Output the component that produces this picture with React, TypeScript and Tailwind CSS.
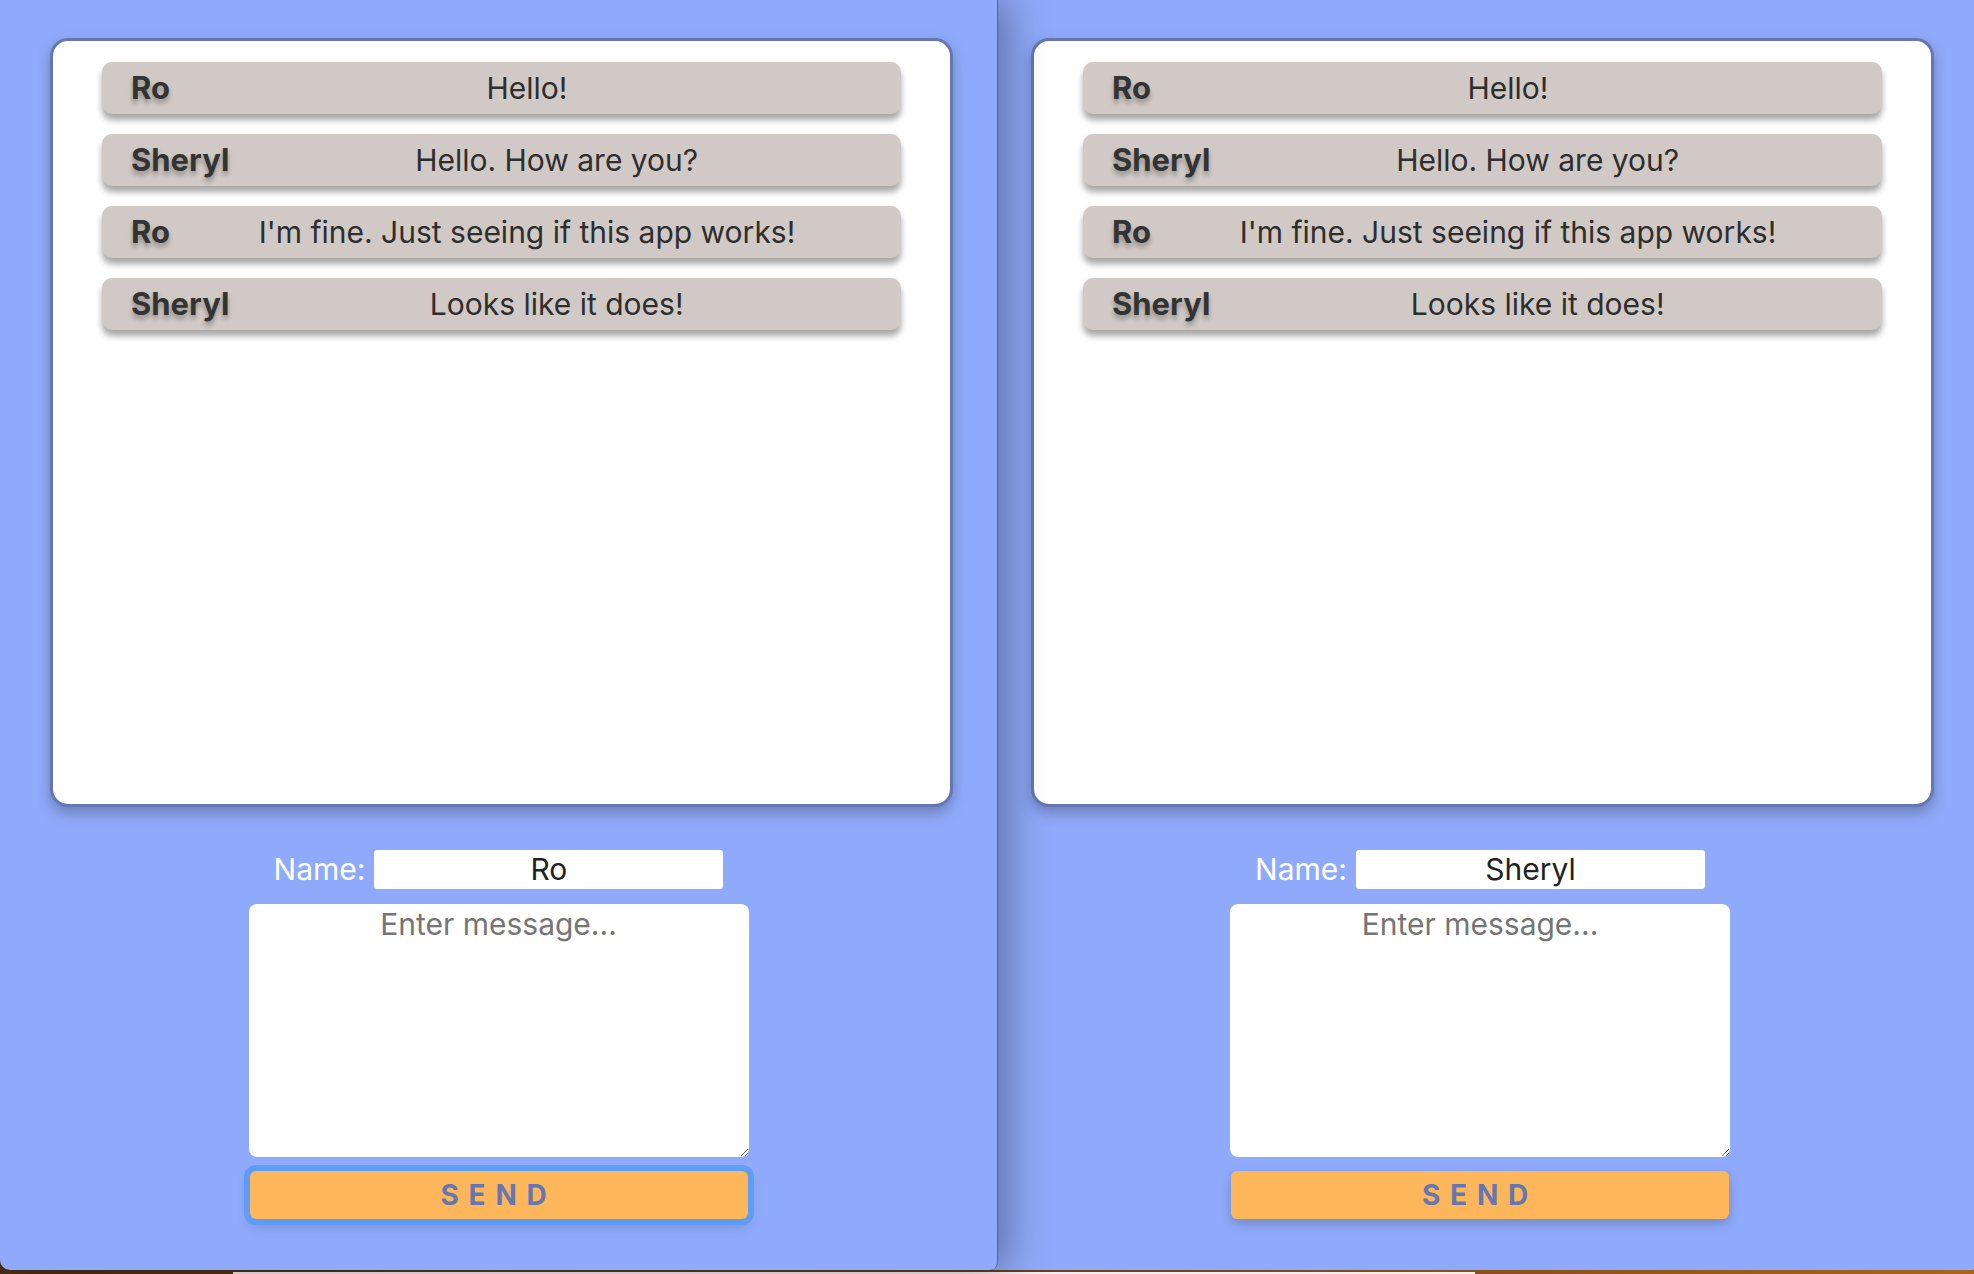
import React from 'react';

interface Message {
  from: string;
  text: string;
}

const messages: Message[] = [
  { from: 'Ro', text: 'Hello!' },
  { from: 'Sheryl', text: 'Hello. How are you?' },
  { from: 'Ro', text: "I'm fine. Just seeing if this app works!" },
  { from: 'Sheryl', text: 'Looks like it does!' },
];

interface ChatWindowProps {
  name: string;
  focused?: boolean;
  className?: string;
}

function ChatWindow({ name, focused, className }: ChatWindowProps) {
  return (
    <div className={`w-[998px] h-[1270px] shrink-0 flex flex-col bg-[#8faafa] font-[Inter,sans-serif] ${className ?? ''}`}>
      <div className="pt-[38px] pl-[50px]">
        <div className="w-[903px] h-[769px] bg-white rounded-[18px] border-[3px] border-[#6577b2] shadow-[0_6px_14px_rgba(0,0,0,0.25)] pt-[21px] px-[49px] flex flex-col gap-[20px]">
          {messages.map((m, i) => (
            <div
              key={i}
              className="flex items-center h-[52px] px-[29px] rounded-[10px] bg-[#d0c9c5] shadow-[0_6px_6px_rgba(0,0,0,0.35)]"
            >
              <span className="text-[31px] font-bold text-[#333] [text-shadow:0_4px_5px_rgba(0,0,0,0.3)]">
                {m.from}
              </span>
              <span className="flex-1 ml-[12px] text-center text-[30px] text-[#2e2e2e]">{m.text}</span>
            </div>
          ))}
        </div>
      </div>

      <div className="mt-[43px] flex flex-col items-center">
        <div className="flex items-center gap-[9px] h-[39px]">
          <span className="text-white text-[30px]">Name:</span>
          <input
            defaultValue={name}
            className="w-[349px] h-[39px] rounded-[3px] bg-white text-center text-[30px] text-[#222] outline-none"
          />
        </div>
        <textarea
          placeholder="Enter message..."
          className="mt-[15px] w-[500px] h-[253px] rounded-[8px] bg-white text-center text-[30px] leading-[1.2] pt-[2px] text-[#222] placeholder:text-[#757575] outline-none"
        />
        <button
          className={`mt-[14px] w-[498px] h-[48px] rounded-[6px] bg-[#fdb65a] text-[#6577b2] text-[28px] font-bold tracking-[0.35em] ${
            focused
              ? 'shadow-[0_0_0_6px_rgba(92,156,246,0.95),0_6px_14px_rgba(0,0,0,0.2)]'
              : 'shadow-[0_5px_12px_rgba(0,0,0,0.2)]'
          }`}
        >
          SEND
        </button>
      </div>
    </div>
  );
}

export default function App() {
  return (
    <div className="w-[1974px] h-[1274px] overflow-hidden flex flex-col bg-gradient-to-r from-[#4a2e1a] via-[#6a3c18] to-[#a8641e]">
      <div className="flex items-start h-[1270px]">
        <ChatWindow
          name="Ro"
          focused
          className="relative z-10 rounded-bl-[10px] rounded-br-[8px] border-r border-[#56669c] shadow-[10px_0_40px_rgba(0,0,0,0.35)]"
        />
        <ChatWindow name="Sheryl" className="-ml-[17px] rounded-br-[8px]" />
      </div>
      <div className="h-[4px] flex">
        <div className="ml-[233px] mt-[2px] w-[1242px] h-[2px] bg-[#f2f0ec]" />
      </div>
    </div>
  );
}
